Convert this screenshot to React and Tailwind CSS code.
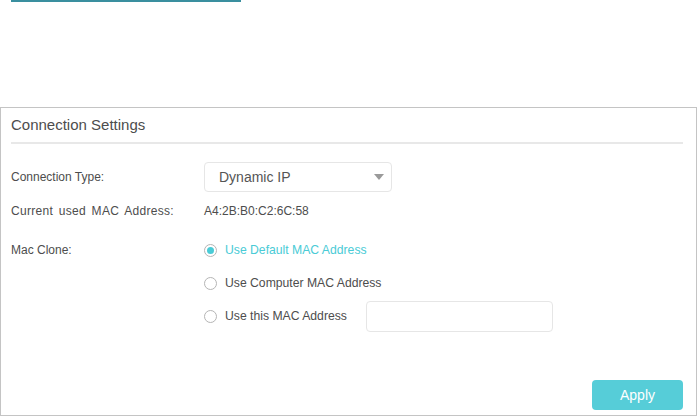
import { useState } from "react";

const Radio = ({ checked, label, onClick }) => (
  <button type="button" onClick={onClick} className="flex items-center h-[20px] text-left">
    <span className="w-[13px] h-[13px] rounded-full border border-[#b5b5b5] bg-white flex items-center justify-center">
      {checked && <span className="w-[7px] h-[7px] rounded-full bg-[#4acbd6]"></span>}
    </span>
    <span className={`ml-[8px] text-[12.2px] ${checked ? "text-[#4acbd6]" : "text-[#4d4d4d]"}`}>{label}</span>
  </button>
);

export default function App() {
  const [clone, setClone] = useState("default");

  return (
    <div className="w-[698px] h-[417px] bg-white relative" style={{ fontFamily: '"Liberation Sans", Arial, sans-serif' }}>
      {/* top tab underline */}
      <div className="ml-[11px] w-[230px] h-[2px] bg-[#3a8f9f]"></div>

      <div className="mt-[105px] w-[697px] h-[309px] border border-[#c4c4c4] pl-[10px] pr-[13px]">
        <div className="h-[34px] flex items-center text-[15px] text-[#4d4d4d]">Connection Settings</div>
        <div className="h-[2px] bg-[#e8e8e8]"></div>

        {/* Connection Type */}
        <div className="mt-[18px] flex items-center h-[30px]">
          <div className="w-[193px] text-[12px] text-[#4d4d4d]">Connection Type:</div>
          <div className="w-[188px] h-[30px] border border-[#e6e6e6] rounded-[4px] flex items-center justify-between pl-[14px] pr-[6px]">
            <span className="text-[14px] text-[#555]">Dynamic IP</span>
            <svg width="12" height="8" viewBox="0 0 12 8">
              <path d="M1 1h10L6 7z" fill="#9a9a9a" />
            </svg>
          </div>
        </div>

        {/* MAC */}
        <div className="mt-[9px] flex items-center h-[20px] text-[12px] text-[#4d4d4d]">
          <div className="w-[193px] [word-spacing:2px] tracking-[0.3px]">Current used MAC Address:</div>
          <div>A4:2B:B0:C2:6C:58</div>
        </div>

        {/* Mac Clone */}
        <div className="mt-[19px] flex">
          <div className="w-[193px] h-[20px] flex items-center text-[12px] text-[#4d4d4d]">Mac Clone:</div>
          <div className="flex flex-col">
            <Radio checked={clone === "default"} label="Use Default MAC Address" onClick={() => setClone("default")} />
            <div className="mt-[13px]">
              <Radio checked={clone === "computer"} label="Use Computer MAC Address" onClick={() => setClone("computer")} />
            </div>
            <div className="mt-[7px] flex items-center h-[32px]">
              <div className="w-[162px]">
                <Radio checked={clone === "custom"} label="Use this MAC Address" onClick={() => setClone("custom")} />
              </div>
              <input className="w-[187px] h-[31px] border border-[#e6e6e6] rounded-[4px] outline-none px-2 text-[13px]" />
            </div>
          </div>
        </div>

        <div className="mt-[48px] flex justify-end">
          <button className="w-[91px] h-[30px] rounded-[4px] bg-[#56cdd8] text-white text-[14px]">Apply</button>
        </div>
      </div>
    </div>
  );
}
